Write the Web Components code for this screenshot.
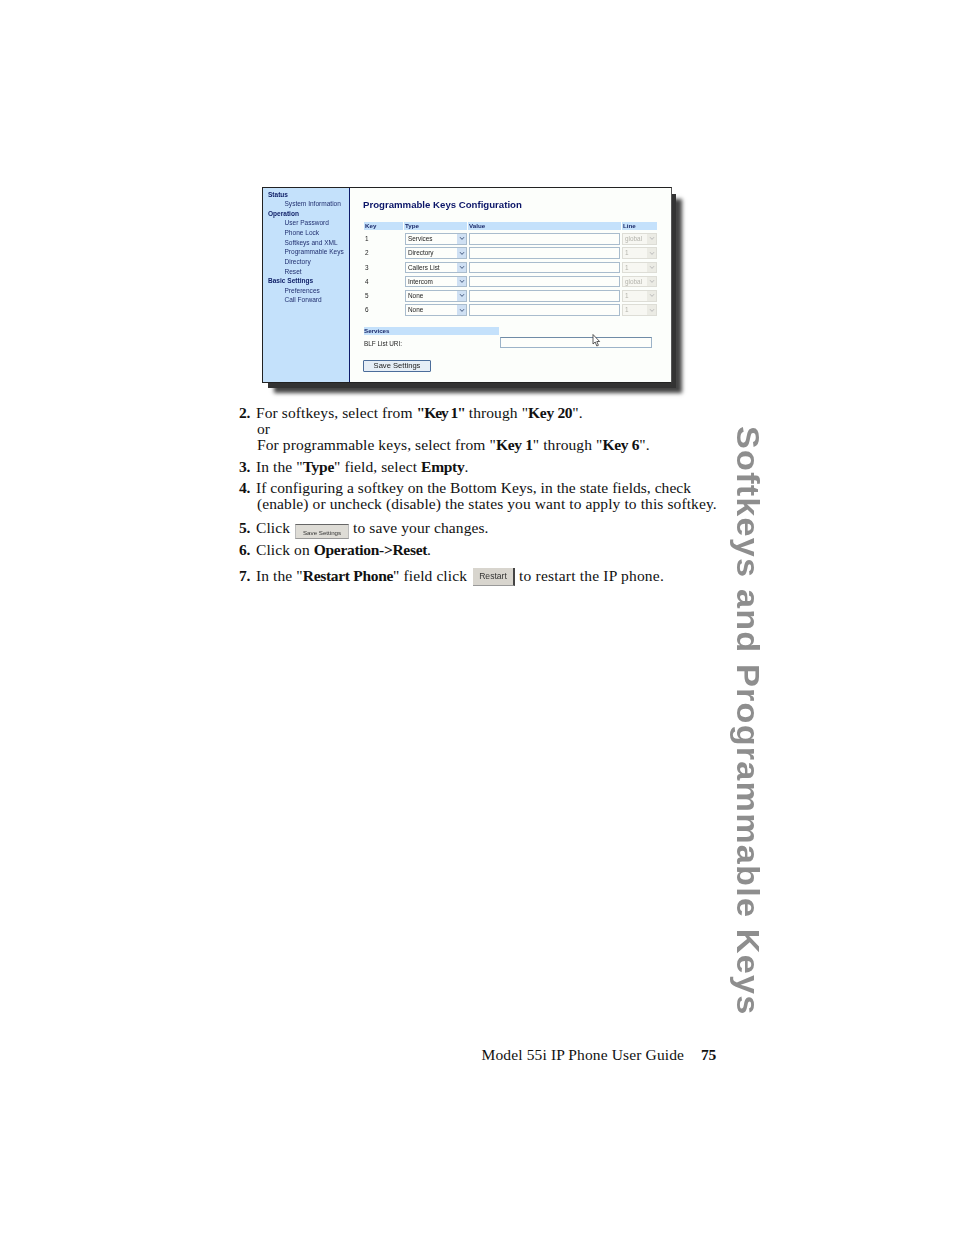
<!DOCTYPE html>
<html><head><meta charset="utf-8">
<style>html,body{margin:0;padding:0;background:#fff}b{letter-spacing:-.3px}b.q{letter-spacing:-1.05px}</style>
</head><body>
<doc-page>
  <phone-shot slot="figure"></phone-shot>
  <step-item slot="steps" n="2." style="margin-top:0"><div>For softkeys, select from <b class="q">"Key 1"</b> through "<b>Key 20</b>".</div><div class="i">or</div><div class="i">For programmable keys, select from "<b>Key 1</b>" through "<b>Key 6</b>".</div></step-item>
  <step-item slot="steps" n="3." gap="6"><div>In the "<b>Type</b>" field, select <b>Empty</b>.</div></step-item>
  <step-item slot="steps" n="4." gap="5"><div style="letter-spacing:.04px">If configuring a softkey on the Bottom Keys, in the state fields, check</div><div class="i">(enable) or uncheck (disable) the states you want to apply to this softkey.</div></step-item>
  <step-item slot="steps" n="5." gap="8"><div>Click <mini-btn kind="save">Save Settings</mini-btn> to save your changes.</div></step-item>
  <step-item slot="steps" n="6." gap="3"><div>Click on <b>Operation-&gt;Reset</b>.</div></step-item>
  <step-item slot="steps" n="7." gap="10"><div>In the "<b>Restart Phone</b>" field click <mini-btn kind="restart">Restart</mini-btn> <span style="letter-spacing:.2px">to restart the IP phone.</span></div></step-item>
</doc-page>
<script>
function def(name, css, html, init){
  customElements.define(name, class extends HTMLElement{
    connectedCallback(){
      if(this.shadowRoot) return;
      const r=this.attachShadow({mode:'open'});
      r.innerHTML='<style>'+css+'</style>'+(typeof html==='function'?html(this):html);
      if(init) init(this,r);
    }
  });
}
def('doc-page',`
:host{display:block;position:relative;width:954px;height:1235px;overflow:hidden;background:#fff;font-family:"Liberation Serif",serif;color:#111}
.wrap{display:flex;flex-direction:column;height:100%;box-sizing:border-box;padding:187px 0 0 239px}
.fig{margin-left:23px}
.steps{margin-top:21.5px;width:490px}
.foot{margin-top:auto;margin-bottom:171px;width:477px;display:flex;justify-content:flex-end;gap:17px;font-size:15.5px;line-height:18px;letter-spacing:.13px}
.foot b{font-weight:bold;letter-spacing:-.3px}
.side{position:absolute;left:732px;top:426px;writing-mode:vertical-rl;font:bold 30.6px/32px "Liberation Sans",sans-serif;letter-spacing:1.05px;color:#8e8e8e;white-space:nowrap;transform:scaleY(1.12);transform-origin:top}
`,`<div class="wrap"><div class="fig"><slot name="figure"></slot></div><div class="steps"><slot name="steps"></slot></div>
<div class="foot"><span>Model 55i IP Phone User Guide</span><b>75</b></div></div>
<div class="side">Softkeys and Programmable Keys</div>`);

def('step-item',`
:host{display:grid;grid-template-columns:17px 1fr;font-size:15.5px;line-height:16px;letter-spacing:.1px;white-space:nowrap}
.n{font-weight:bold;letter-spacing:-.3px}
::slotted(div.i){margin-left:1px}
::slotted(div){min-height:16px}
`,el=>`<div class="n">${el.getAttribute('n')}</div><div><slot></slot></div>`,
(el)=>{const g=el.getAttribute('gap'); if(g) el.style.marginTop=g+'px';});

def('mini-btn',`
:host{display:inline-block;vertical-align:middle;box-sizing:border-box;font-family:"Liberation Sans",sans-serif;text-align:center;color:#333;background:#d6d3cc;white-space:nowrap;letter-spacing:0}
:host([kind=save]){width:54px;height:15px;margin:4px 0 0 1px;font-size:6.2px;line-height:15px;border-top:1px solid #666;border-left:1px solid #bbb;border-right:1px solid #bbb;border-bottom:1px solid #999;background:#dedcd6;filter:blur(.2px)}
:host([kind=restart]){width:42px;height:18px;margin:0 0 0 2px;font-size:8.6px;line-height:17px;border-right:2px solid #444;border-bottom:1px solid #999;background:#d8d5ce;filter:blur(.25px)}
`,`<slot></slot>`);

def('nav-menu',`
:host{display:block;box-sizing:border-box;width:86.500px;background:#c4e1fb;border-right:1.500px solid #0f1d6b;padding-top:1.6px;font:6.55px/9.62px "Liberation Sans",sans-serif;color:#1b2a6a;flex:none}
.h{padding-left:5px;font-weight:bold;color:#0e1e66}
.a{padding-left:21.5px;color:#223070;white-space:nowrap}
`,`<div class="h">Status</div><div class="a">System Information</div>
<div class="h">Operation</div><div class="a">User Password</div><div class="a">Phone Lock</div><div class="a">Softkeys and XML</div><div class="a">Programmable Keys</div><div class="a">Directory</div><div class="a">Reset</div>
<div class="h">Basic Settings</div><div class="a">Preferences</div><div class="a">Call Forward</div>`);

def('sel-box',`
:host{display:flex;box-sizing:border-box;height:11.6px;border:1px solid #a9bccd;background:#fdfefb;font:6.4px/9.6px "Liberation Sans",sans-serif;color:#222;padding-left:2px;align-items:center;justify-content:space-between}
:host([off]){border-color:#ddddd6;background:#f7f7f2;color:#b4b4ac;padding-left:2px}
i{display:flex;align-items:center;justify-content:center;width:9px;height:100%;background:#cfe0f3;flex:none}
:host([off]) i{background:#ebebe4}
svg{width:6px;height:5px;display:block}
`,`<span><slot></slot></span><i><svg viewBox="0 0 6 5"><path d="M1 1.2 3 3.4 5 1.2" fill="none" stroke="#445a80" stroke-width="1"/></svg></i>`,
(el,r)=>{if(el.hasAttribute('off')) r.querySelector('path').setAttribute('stroke','#bbb');});

def('key-row',`
:host{display:grid;grid-template-columns:41px 63px 154px 35px;column-gap:0;height:14.25px;align-items:start;font:6.4px/11.6px "Liberation Sans",sans-serif;color:#222}
.k{padding-left:1px}
.v{box-sizing:border-box;height:11.6px;border:1px solid #a9bccd;background:#fdfefb;margin-right:2px;margin-left:1px}
sel-box.t{margin-right:1px}
`,el=>`<div class="k">${el.getAttribute('k')}</div><sel-box class="t">${el.getAttribute('t')}</sel-box><div class="v"></div><sel-box off>${el.getAttribute('l')}</sel-box>`);

def('phone-shot',`
:host{display:block;width:410px;height:196px}
.box{position:relative;display:flex;box-sizing:border-box;width:410px;height:196px;border:1.5px solid #222;border-right-color:#555;background:#fcfefb;box-shadow:5px 6px 0 -1px #333,11px 11px 4px -1px #444;filter:blur(.3px)}
.main{flex:1;min-width:0;padding:11px 0 0 13.5px;display:flex;flex-direction:column}
h1{margin:0;font:bold 9.65px/12px "Liberation Sans",sans-serif;color:#0b1668;white-space:nowrap}
.hd{display:grid;grid-template-columns:39px 63px 153px 35px;column-gap:1px;width:293px;margin:10.5px 0 3px 1px;font:bold 6.2px/8.6px "Liberation Sans",sans-serif;color:#1b2a6a}
.hd span{background:#c4e1fb;padding-left:1px;height:8.6px}
.sv{margin:8.6px 0 0 1px;width:135px;height:8px;background:#c4e1fb;font:bold 6.2px/8px "Liberation Sans",sans-serif;color:#1b2a6a;flex:none}
.blf{display:flex;width:289px;margin:1.6px 0 0 1px;font:6.4px/9px "Liberation Sans",sans-serif;color:#222}
.blf span{width:136px;padding-top:2px}
.blf i{box-sizing:border-box;display:block;width:152px;height:11.7px;border:1px solid #9cb3c8;border-top-color:#6f8ba6;background:#fdfefb}
.save{box-sizing:border-box;width:68px;height:12px;margin-top:12px;border:1px solid #4b6d9a;border-radius:1px;background:#e6eef6;font:7.6px/10px "Liberation Sans",sans-serif;color:#222;text-align:center;flex:none}
.rows{width:293px;margin-left:1px}
.cur{position:absolute;left:329px;top:145.500px;width:9px;height:13px}
`,`<div class="box"><nav-menu></nav-menu><div class="main">
<h1>Programmable Keys Configuration</h1>
<div class="hd"><span>Key</span><span>Type</span><span>Value</span><span>Line</span></div>
<div class="rows">
<key-row k="1" t="Services" l="global"></key-row>
<key-row k="2" t="Directory" l="1"></key-row>
<key-row k="3" t="Callers List" l="1"></key-row>
<key-row k="4" t="Intercom" l="global"></key-row>
<key-row k="5" t="None" l="1"></key-row>
<key-row k="6" t="None" l="1"></key-row>
</div>
<div class="sv">Services</div>
<div class="blf"><span>BLF List URI:</span><i></i></div>
<div class="save">Save Settings</div>
</div>
<svg class="cur" viewBox="0 0 9 13"><path d="M1 .5V10L3.2 8 4.8 12 6.4 11.300 4.800 7.500H7.600Z" fill="#fff" stroke="#333" stroke-width=".8"/></svg>
</div>`);
</script>
</body></html>
